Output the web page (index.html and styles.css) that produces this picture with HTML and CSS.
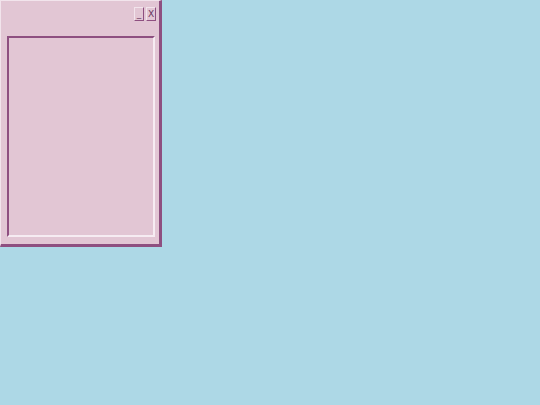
FILE: index.html
```html
<!DOCTYPE html>
<html>
<head>
<meta charset="utf-8">
<link rel="stylesheet" href="styles.css">
</head>
<body>
<div class="window">
  <div class="titlebar">
    <span class="btn">_</span>
    <span class="btn">X</span>
  </div>
  <div class="panel"></div>
</div>
</body>
</html>
```
FILE: styles.css
```css
html, body {
  margin: 0;
  padding: 0;
  background: #add8e6;
  width: 540px;
  height: 405px;
  overflow: hidden;
}
.window {
  box-sizing: border-box;
  width: 162px;
  height: 247px;
  background: #e2c6d4;
  border-style: solid;
  border-width: 1px 3px 3px 1px;
  border-color: #f2e4ec #8e4f80 #8e4f80 #f2e4ec;
  display: flex;
  flex-direction: column;
  padding: 6px 4px 7px 6px;
}
.titlebar {
  display: flex;
  justify-content: flex-end;
  gap: 2px;
  height: 14px;
  margin-right: -1px;
  margin-bottom: 15px;
}
.btn {
  box-sizing: border-box;
  width: 10px;
  height: 14px;
  border-style: solid;
  border-width: 1px;
  border-color: #f2e4ec #8e4f80 #8e4f80 #f2e4ec;
  font-family: "DejaVu Sans", sans-serif;
  font-size: 9px;
  line-height: 12px;
  text-align: center;
  color: #6a3560;
  background: #e2c6d4;
}
.panel {
  flex: 1;
  border-style: solid;
  border-width: 2px 2px 2px 2px;
  border-color: #8e4f80 #f6ecf2 #f6ecf2 #8e4f80;
}
```
